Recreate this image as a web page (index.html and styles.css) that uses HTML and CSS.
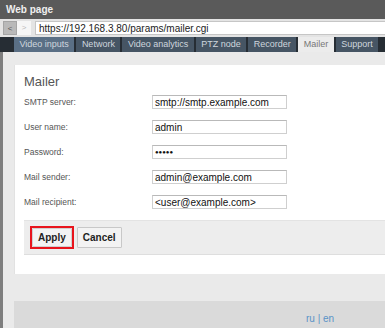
FILE: index.html
```html
<!DOCTYPE html>
<html lang="en">
<head>
    <meta charset="UTF-8">
    <title>Mailer</title>
    <link rel="stylesheet" href="styles.css">
</head>
<body>
    <div class="titlebar">Web page</div>

    <div class="addressbar">
        <span class="nav-btn back">&lt;</span>
        <span class="nav-btn fwd">&gt;</span>
        <div class="url">https://192.168.3.80/params/mailer.cgi</div>
    </div>

    <div class="tabs">
        <span class="tab first">Video inputs</span>
        <span class="tab">Network</span>
        <span class="tab">Video analytics</span>
        <span class="tab">PTZ node</span>
        <span class="tab">Recorder</span>
        <span class="tab active">Mailer</span>
        <span class="tab">Support</span>
    </div>

    <div class="page">
        <div class="edge"></div>
        <div class="main">
            <div class="panel">
                <h3>Mailer</h3>
                <div class="row">
                    <label>SMTP server:</label>
                    <div class="field">smtp://smtp.example.com</div>
                </div>
                <div class="row">
                    <label>User name:</label>
                    <div class="field">admin</div>
                </div>
                <div class="row">
                    <label>Password:</label>
                    <div class="field dots">&#9679;&#9679;&#9679;&#9679;&#9679;</div>
                </div>
                <div class="row">
                    <label>Mail sender:</label>
                    <div class="field">admin@example.com</div>
                </div>
                <div class="row">
                    <label>Mail recipient:</label>
                    <div class="field">&lt;user@example.com&gt;</div>
                </div>

                <div class="button-bar">
                    <span class="highlight"><button>Apply</button></span>
                    <button>Cancel</button>
                </div>
            </div>

            <div class="footer"><a href="#">ru</a> | <a href="#">en</a></div>
        </div>
    </div>
</body>
</html>
```

FILE: styles.css
```css
body {
    margin: 0;
    font-family: "Liberation Sans", Arial, sans-serif;
    background-color: #eaeaea;
    overflow: hidden;
}
.titlebar {
    height: 19px;
    line-height: 20px;
    padding-left: 6px;
    background-color: #5a5a5a;
    color: #f0f0f0;
    font-size: 10px;
    font-weight: bold;
}
.addressbar {
    height: 18px;
    display: flex;
    align-items: flex-start;
    padding: 2px 0 0 3px;
    box-sizing: border-box;
    background-color: #e4e4e4;
}
.nav-btn {
    width: 14px;
    height: 14px;
    line-height: 14px;
    text-align: center;
    font-size: 8px;
    box-sizing: border-box;
}
.back {
    background-color: #b9b9b9;
    border: 1px solid #a5a5a5;
    color: #555;
}
.fwd {
    background-color: #f6f6f6;
    color: #bbb;
}
.url {
    flex: 1;
    height: 14px;
    line-height: 13px;
    margin-left: 4px;
    padding-left: 3px;
    background-color: #fff;
    border: 1px solid #c6c6c6;
    border-right: none;
    box-sizing: border-box;
    font-size: 10px;
    color: #222;
}
.tabs {
    height: 15px;
    display: flex;
    gap: 2px;
    padding-left: 14px;
    background-color: #262d34;
    white-space: nowrap;
    overflow: hidden;
}
.tab {
    flex-shrink: 0;
    padding: 0 5.5px;
    line-height: 15px;
    font-size: 9px;
    color: #cfd6de;
    background-color: #465564;
}
.tab.first {
    background-color: #5a6f85;
}
.tab.active {
    background-color: #ececec;
    color: #777;
}
.page {
    display: flex;
}
.edge {
    width: 3px;
    background-color: #7e7e7e;
}
.main {
    flex: 1;
    padding: 13px 0 0 11px;
}
.panel {
    background-color: #fff;
    border-left: 1px solid #e2e2e2;
    padding: 9px 0 19px 9px;
}
.panel h3 {
    margin: 0;
    height: 15px;
    line-height: 15px;
    font-size: 13px;
    font-weight: normal;
    color: #555;
}
.row {
    display: flex;
    align-items: center;
    height: 25px;
}
.row label {
    width: 128px;
    font-size: 8.5px;
    color: #555;
}
.field {
    width: 135px;
    height: 14px;
    line-height: 13px;
    padding-left: 2px;
    box-sizing: border-box;
    border: 1px solid #cfcfcf;
    border-top-color: #b9b9b9;
    font-size: 10px;
    color: #111;
}
.field.dots {
    font-size: 6px;
}
.button-bar {
    margin-top: 6px;
    height: 35px;
    display: flex;
    align-items: center;
    gap: 3px;
    padding-left: 6px;
    box-sizing: border-box;
    background-color: #ededed;
    border-top: 1px solid #e3e3e3;
    border-bottom: 1px solid #dedede;
}
button {
    height: 21px;
    padding: 0 5px;
    font-family: "Liberation Sans", Arial, sans-serif;
    font-size: 10px;
    font-weight: bold;
    color: #222;
    background-color: #f3f3f3;
    border: 1px solid #c8c8c8;
    border-radius: 1px;
}
.highlight {
    display: flex;
    border: 2px solid #e8141c;
}
.highlight button {
    height: 19px;
    padding: 0 5px;
    border: 1px solid #d0d0d0;
}
.footer {
    margin-top: 27px;
    height: 27px;
    line-height: 36px;
    padding-left: 292px;
    background-color: #dadada;
    font-size: 10px;
    color: #5b93c7;
}
.footer a {
    color: #5b93c7;
    text-decoration: none;
}
```
